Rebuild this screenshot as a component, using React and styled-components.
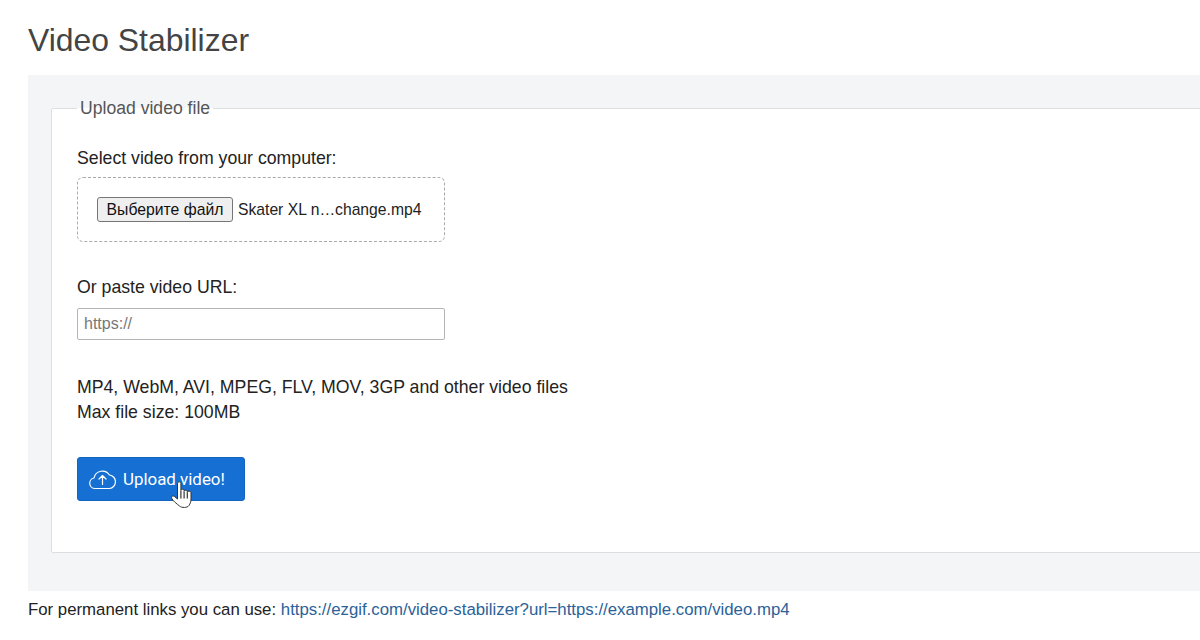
import React from "react";
import styled, { createGlobalStyle } from "styled-components";

const Global = createGlobalStyle`
 html, body {
  margin: 0;
  padding: 0;
  background: #fff;
  overflow: hidden;
 }
 body {
  font-family: "Liberation Sans", Arial, sans-serif;
  font-size: 16px;
  color: #222;
 }
`;

const Page = styled.main`
 width: 1200px;
 height: 640px;
 overflow: hidden;
 padding: 0 0 0 28px;
 box-sizing: border-box;
`;

const Title = styled.h1`
 margin: 0;
 padding-top: 21px;
 height: 75px;
 box-sizing: border-box;
 font-size: 31.9px;
 line-height: 38px;
 font-weight: 400;
 color: #444;
`;

const Panel = styled.section`
 background: #f4f5f7;
 height: 516px;
 width: 1300px;
 box-sizing: border-box;
 padding: 23px 24px 38px 23px;
`;

const Fieldset = styled.fieldset`
 margin: 0;
 padding: 0 25px;
 min-width: 0;
 height: 455px;
 box-sizing: border-box;
 background: #fff;
 border: 1px solid #dcdee2;
 border-radius: 2px;
`;

const Legend = styled.legend`
 padding: 0 3px;
 font-size: 17.6px;
 line-height: 20px;
 color: #555;
`;

const Label = styled.div`
 margin-top: ${(p) => p.$top}px;
 font-size: 17.7px;
 line-height: 20px;
 color: #222;
`;

const DropZone = styled.div`
 margin-top: 9px;
 width: 368px;
 height: 65px;
 box-sizing: border-box;
 display: flex;
 align-items: center;
 padding-left: 19px;
 gap: 5px;
 border: 1px dashed #aaa;
 border-radius: 6px;
 font-size: 15.7px;
 color: #222;
`;

const FileButton = styled.button`
 width: 136px;
 height: 25px;
 padding: 0;
 font-family: inherit;
 font-size: 15.75px;
 color: #111;
 background: #efefef;
 border: 1px solid #767676;
 border-radius: 3px;
`;

const UrlInput = styled.input`
 display: block;
 margin-top: 11px;
 width: 368px;
 height: 32px;
 box-sizing: border-box;
 padding: 0 6px;
 font-family: inherit;
 font-size: 16px;
 background: #fff;
 border: 1px solid #b5b5b5;
 border-radius: 2px;
 &::placeholder {
  color: #777;
 }
`;

const Info = styled.p`
 margin: 35px 0 0;
 font-size: 17.7px;
 line-height: 25px;
 color: #222;
`;

const UploadWrap = styled.div`
 position: relative;
 margin-top: 32px;
 width: 168px;
`;

const UploadButton = styled.button`
 display: flex;
 align-items: center;
 gap: 7px;
 width: 168px;
 height: 44px;
 padding: 0 0 0 11px;
 box-sizing: border-box;
 background: #1670d3;
 border: 1px solid #1565c0;
 border-radius: 3px;
 color: #fff;
 font-family: Roboto, sans-serif;
 font-size: 16.9px;
`;

const Cursor = styled.svg`
 position: absolute;
 left: 94px;
 top: 24px;
 width: 22px;
 height: 28px;
`;

const Footer = styled.p`
 margin: 9px 0 0;
 font-size: 16.8px;
 line-height: 20px;
 color: #222;
 a {
  color: #2b6299;
  text-decoration: none;
 }
`;

const CloudIcon = () => (
 <svg width="27" height="22" viewBox="0 0 27 22" fill="none" stroke="#fff" strokeWidth="1.200" strokeLinecap="round" strokeLinejoin="round">
  <path d="M7 20.500H6A5.300 5.300 0 0 1 5 10 8.500 8.500 0 0 1 20.500 7 6.800 6.800 0 0 1 20.500 20.500z" />
  <path d="M13.500 16.500V7.500M10 11l3.500-3.500 3.500 3.500" />
 </svg>
);

const App = () => {
 return (
  <Page>
   <Global />
   <Title>Video Stabilizer</Title>
   <Panel>
    <Fieldset>
     <Legend>Upload video file</Legend>
     <Label $top={30}>Select video from your computer:</Label>
     <DropZone>
      <FileButton type="button">Выберите файл</FileButton>
      <span>Skater XL n…change.mp4</span>
     </DropZone>
     <Label $top={35}>Or paste video URL:</Label>
     <UrlInput placeholder="https://" />
     <Info>
      MP4, WebM, AVI, MPEG, FLV, MOV, 3GP and other video files
      <br />
      Max file size: 100MB
     </Info>
     <UploadWrap>
      <UploadButton type="button">
       <CloudIcon />
       Upload video!
      </UploadButton>
      <Cursor viewBox="0 0 22 28">
       <path
        d="M6.500 2.500c0-2.200 3.400-2.200 3.400 0v7c0-1.600 3.200-1.600 3.200 0v.8c0-1.500 3.200-1.500 3.200 0v1c0-1.500 3.700-1.500 3.700.3v6.400c0 3.500-1 4.500-2 6.500-1.500 2.500-7.500 2.500-9.500.5C5.500 22.500 2.500 20.500.8 17.500c-1-1.800 1-3.400 2.700-2l3 2.500z"
        fill="#fff"
        stroke="#333"
        strokeWidth="1"
        strokeLinejoin="round"
       />
       <path d="M9.900 10v7.500M13.100 10.500v7M16.300 11.500v6" stroke="#333" strokeWidth="1.200" />
      </Cursor>
     </UploadWrap>
    </Fieldset>
   </Panel>
   <Footer>
    For permanent links you can use:{" "}
    <a href="#link">https://ezgif.com/video-stabilizer?url=https://example.com/video.mp4</a>
   </Footer>
  </Page>
 );
};

export default App;
